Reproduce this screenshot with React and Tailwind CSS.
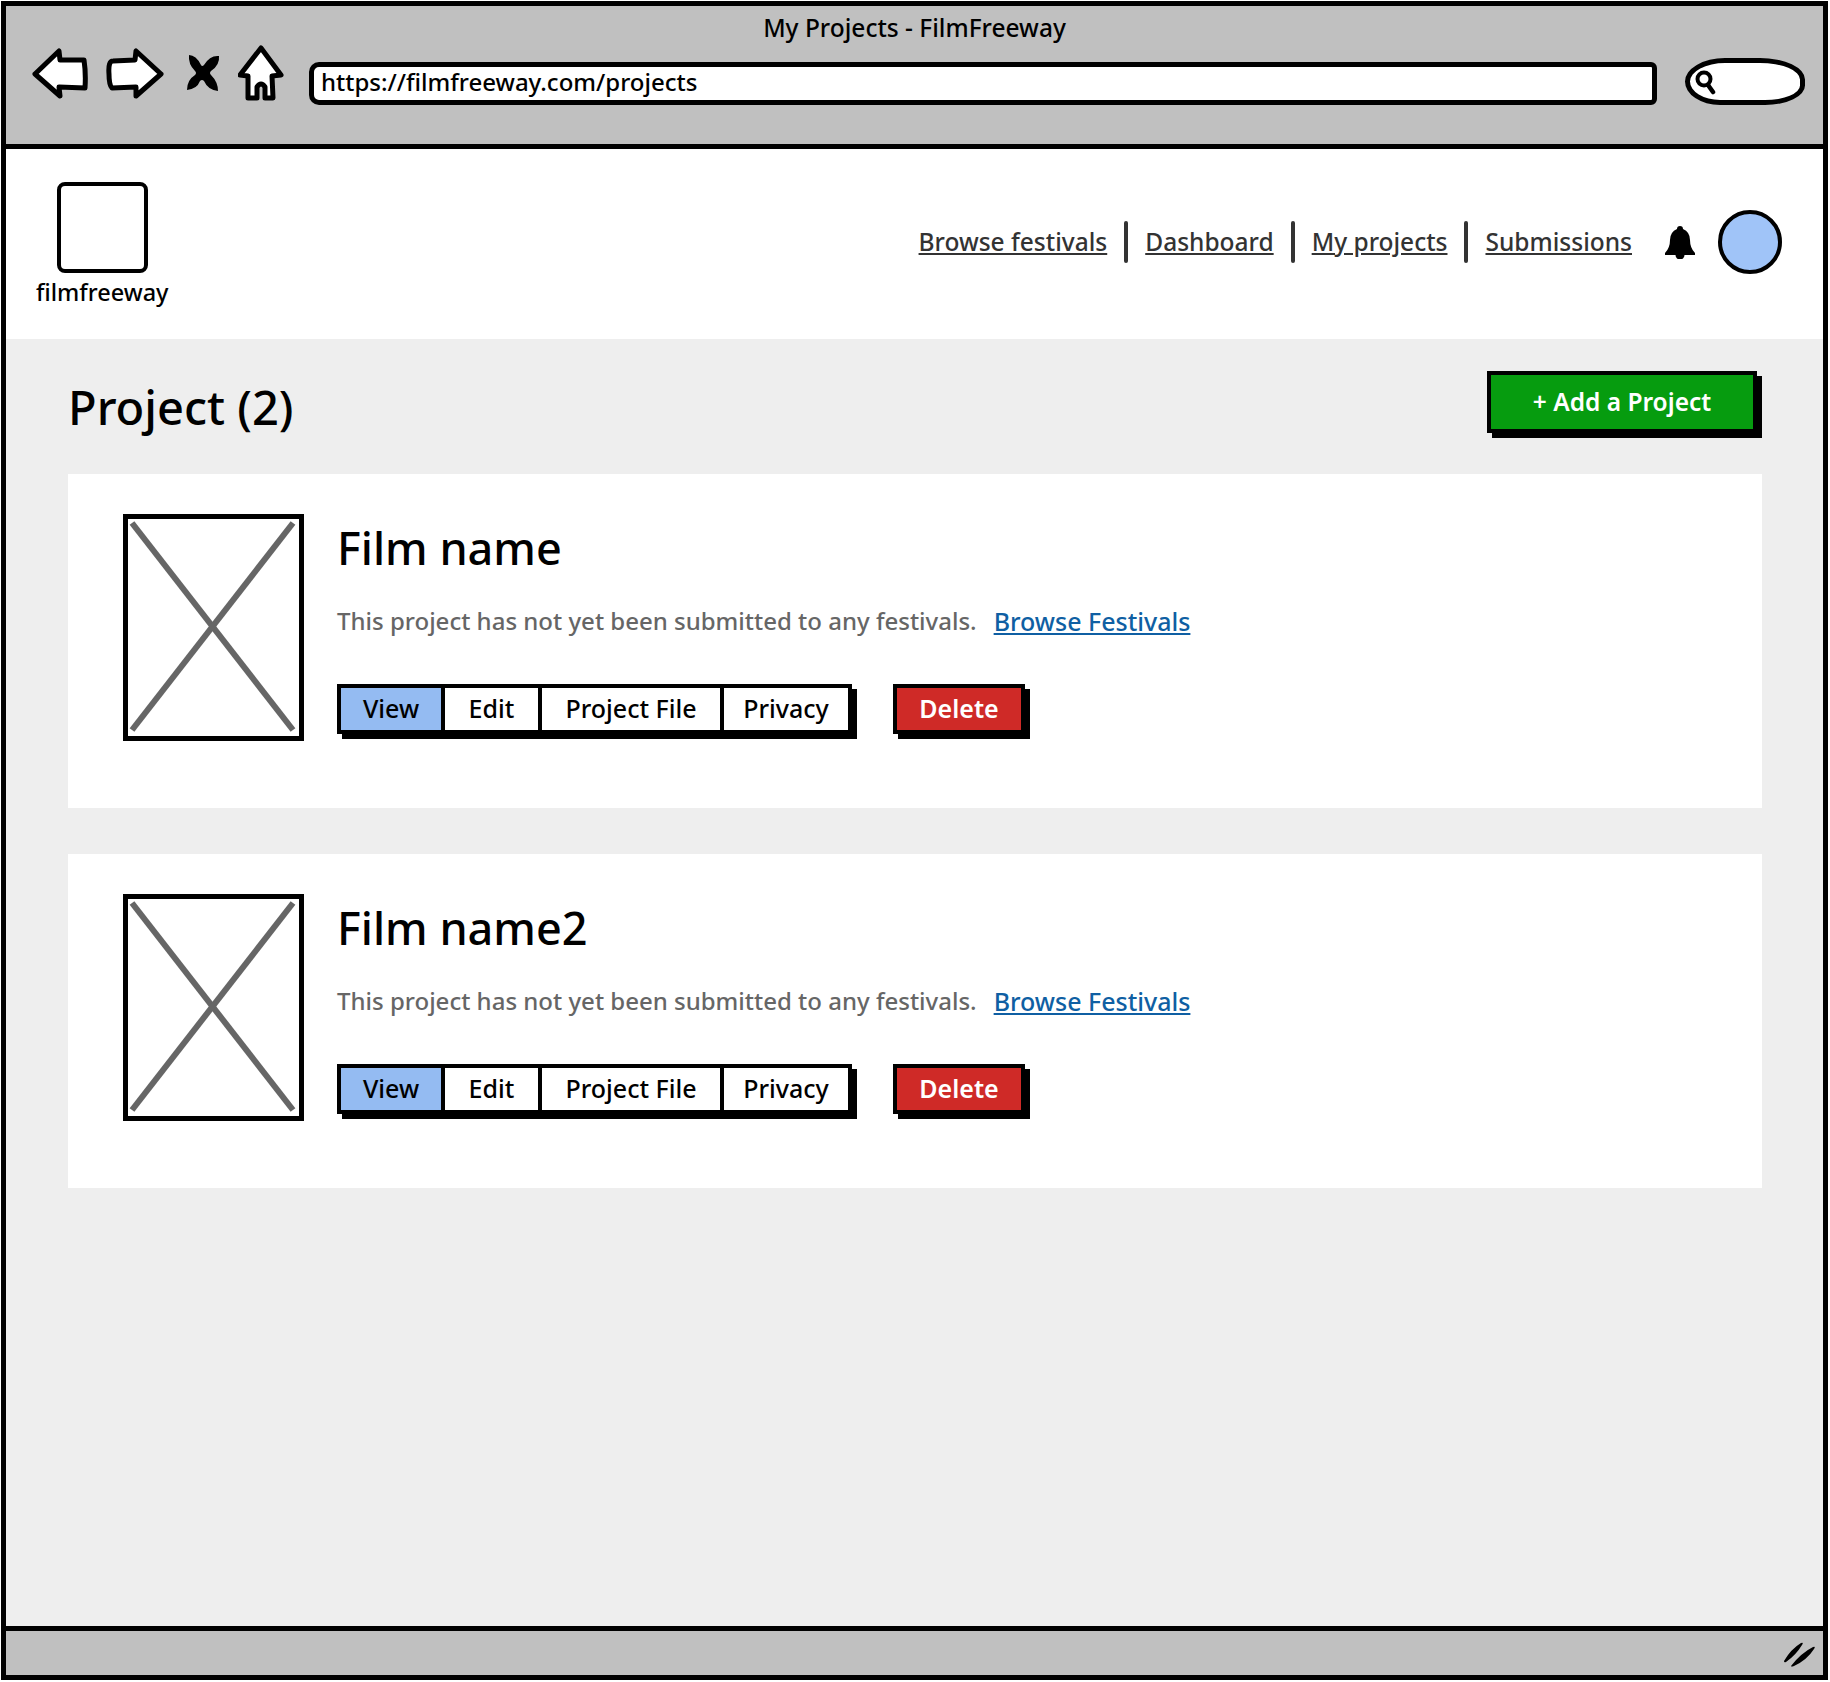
import React from 'react';

const FONT = 'font-["Noto_Sans","Lato",sans-serif]';

const BackIcon = () => (
  <svg width="56" height="52" viewBox="0 0 56 52" fill="#fff" stroke="#000" strokeWidth="5" strokeLinejoin="round">
    <path d="M3 27 L27 4 L28 13 L52 13 Q54 26 53 41 L27 40 L28 49 Z" />
  </svg>
);

const ForwardIcon = () => (
  <svg width="58" height="52" viewBox="0 0 58 52" fill="#fff" stroke="#000" strokeWidth="5" strokeLinejoin="round">
    <path d="M55 27 L30 4 L29 13 L7 14 Q2 14 3 27 Q3 38 6 41 L30 40 L30 49 Z" />
  </svg>
);

const StopIcon = () => (
  <svg width="34" height="40" viewBox="0 0 34 40" fill="#000">
    <path d="M3 2 Q10 2 15 12 Q16 14 18 12 Q24 2 33 3 Q34 12 25 18 Q23 20 25 22 Q32 29 32 38 Q22 37 18 28 Q16 26 14 28 Q11 36 1 37 Q1 27 9 22 Q11 20 9 18 Q2 11 3 2 Z" />
  </svg>
);

const HomeIcon = () => (
  <svg width="46" height="56" viewBox="0 0 46 56" fill="#fff" stroke="#000" strokeWidth="5" strokeLinejoin="round">
    <path d="M23 3 L43 30 L34 31 L35 53 L27 53 L27 42 Q23 36 19 42 L19 53 L10 53 L10 31 L2 30 Z" />
  </svg>
);

const BellIcon = () => (
  <svg width="30" height="34" viewBox="0 0 30 34" fill="#000">
    <path d="M15 1 Q18 1 18 4 Q25 7 25 15 Q25 23 30 28 L30 30 L0 30 L0 28 Q5 23 5 15 Q5 7 12 4 Q12 1 15 1 Z" />
    <circle cx="15" cy="30" r="4.5" />
  </svg>
);

const SearchGlyph = () => (
  <svg width="24" height="28" viewBox="0 0 24 28" fill="none" stroke="#000">
    <circle cx="11" cy="12" r="6.5" strokeWidth="4" />
    <path d="M15 18 L20 25" strokeWidth="4.5" strokeLinecap="round" />
  </svg>
);

const ResizeGrip = () => (
  <svg width="34" height="28" viewBox="0 0 34 28" fill="#000">
    <path d="M1 22 Q8 10 18 4 Q21 3 19 6 Q13 16 3 23 Q1 24 1 22 Z" />
    <path d="M8 27 Q18 14 30 8 Q33 7 31 10 Q24 21 11 27 Q8 28 8 27 Z" />
  </svg>
);

const Thumb = () => (
  <div className="w-[181px] h-[227px] shrink-0 border-[5px] border-black bg-white">
    <svg width="171" height="217" viewBox="0 0 171 217" stroke="#666" strokeWidth="6" fill="none">
      <path d="M4 4 L165 211" />
      <path d="M165 4 L4 211" />
    </svg>
  </div>
);

const TABS = [
  { label: 'View', width: 'w-[100px]', active: true },
  { label: 'Edit', width: 'w-[97px]' },
  { label: 'Project File', width: 'w-[182px]' },
  { label: 'Privacy', width: 'w-[128px]' },
];

function ProjectCard({ name }) {
  return (
    <div className="h-[334px] bg-white pl-[55px] pt-[40px] flex items-start gap-[33px]">
      <Thumb />
      <div className="flex flex-col">
        <h2 className="text-[45px] leading-[60px] font-medium text-black mt-[4px]">{name}</h2>
        <div className="mt-[27px] h-[32px] flex items-center text-[24px] leading-[32px] font-medium whitespace-nowrap">
          <span className="text-[#666]">This project has not yet been submitted to any festivals.</span>
          <a className="ml-[17px] text-[25px] text-[#0f5fa3] underline">Browse Festivals</a>
        </div>
        <div className="mt-[47px] flex items-center gap-[41px]">
          <div className="flex h-[50px] border-[4px] border-black bg-white shadow-[5px_5px_0_#000]">
            {TABS.map((tab, i) => (
              <div
                key={tab.label}
                className={`${tab.width} flex items-center justify-center text-[25px] font-medium text-black ${i > 0 ? 'border-l-[4px] border-black' : ''} ${tab.active ? 'bg-[#94bbf2]' : 'bg-white'}`}
              >
                {tab.label}
              </div>
            ))}
          </div>
          <div className="w-[132px] h-[50px] border-[4px] border-black bg-[#cf2a27] shadow-[5px_5px_0_#000] flex items-center justify-center text-[25px] font-semibold text-white">
            Delete
          </div>
        </div>
      </div>
    </div>
  );
}

const NAV_LINKS = ['Browse festivals', 'Dashboard', 'My projects', 'Submissions'];

export default function App() {
  return (
    <div className={`w-[1830px] h-[1682px] bg-white p-[1px] ${FONT}`}>
      <div className="w-[1827px] h-[1679px] border-[5px] border-black flex flex-col">
        {/* browser chrome */}
        <div className="h-[143px] shrink-0 bg-[#c0c0c0] border-b-[5px] border-black">
          <div className="h-[38px] flex items-end justify-center text-[24.5px] leading-[32px] font-medium text-black">
            My Projects - FilmFreeway
          </div>
          <div className="flex items-center pl-[26px] mt-[6px] h-[58px]">
            <div className="flex items-center mb-[12px]">
              <BackIcon />
              <div className="ml-[18px]"><ForwardIcon /></div>
              <div className="ml-[22px]"><StopIcon /></div>
              <div className="ml-[18px]"><HomeIcon /></div>
            </div>
            <div className="ml-[25px] w-[1348px] h-[43px] mt-[8px] pb-[3px] bg-white border-[5px] border-black rounded-l-[10px] rounded-r-[6px] pl-[7px] flex items-center text-[24px] font-medium text-black">
              https://filmfreeway.com/projects
            </div>
            <div className="ml-[28px] w-[120px] h-[47px] mt-[4px] bg-white border-[5px] border-black rounded-[40%_45%_40%_35%/60%_55%_50%_60%] pl-[3px] flex items-center">
              <SearchGlyph />
            </div>
          </div>
        </div>

        {/* site header */}
        <div className="h-[190px] shrink-0 bg-white flex items-center justify-between pl-[30px] pr-[41px]">
          <div className="flex flex-col items-center mt-[2px]">
            <div className="w-[91px] h-[91px] rounded-[8px] border-[4px] border-black" />
            <span className="mt-[3px] text-[23.5px] leading-[32px] font-medium text-black">filmfreeway</span>
          </div>
          <div className="flex items-center mt-[-4px]">
            {NAV_LINKS.map((link, i) => (
              <div key={link} className="flex items-center">
                {i > 0 && <div className="mx-[17px] w-[4px] h-[42px] rounded bg-[#333]" />}
                <a className="text-[24.5px] font-medium text-[#333] underline">{link}</a>
              </div>
            ))}
            <div className="ml-[33px]"><BellIcon /></div>
            <div className="ml-[23px] w-[64px] h-[64px] rounded-full border-[4px] border-black bg-[#a0c4f8]" />
          </div>
        </div>

        {/* page content */}
        <div className="flex-1 bg-[#eeeeee] pl-[62px] pr-[61px]">
          <div className="h-[135px] flex items-start justify-between">
            <h1 className="mt-[40px] text-[47px] leading-[56px] font-medium text-black">Project (2)</h1>
            <div className="mt-[32px] w-[270px] h-[62px] mr-[5px] border-[4px] border-black bg-[#069c0f] shadow-[5px_5px_0_#000] flex items-center justify-center text-[24.5px] font-semibold text-white">
              + Add a Project
            </div>
          </div>
          <div className="flex flex-col gap-[46px]">
            <ProjectCard name="Film name" />
            <ProjectCard name="Film name2" />
          </div>
        </div>

        {/* status bar */}
        <div className="h-[49px] shrink-0 bg-[#c0c0c0] border-t-[5px] border-black flex items-center justify-end pr-[6px]">
          <ResizeGrip />
        </div>
      </div>
    </div>
  );
}
